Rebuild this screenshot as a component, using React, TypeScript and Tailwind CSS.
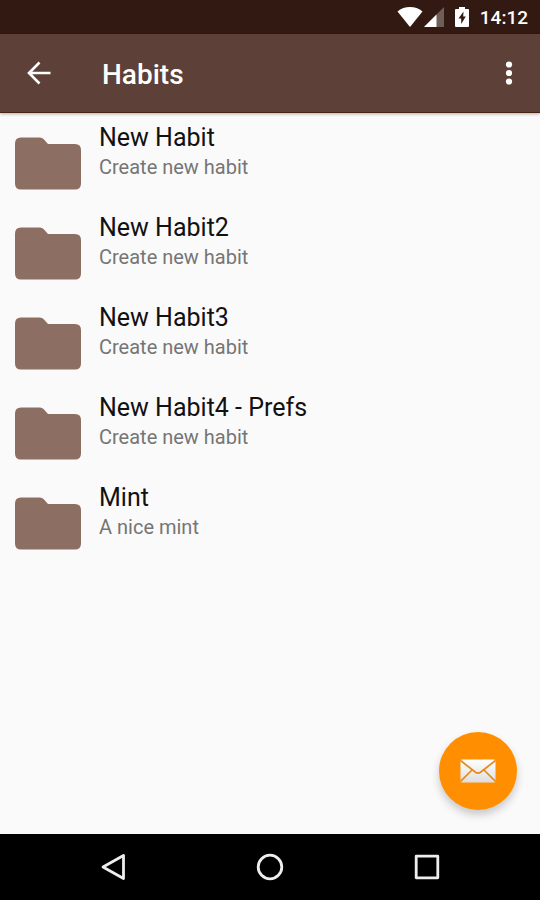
import React from "react";

const habits = [
  { title: "New Habit", subtitle: "Create new habit" },
  { title: "New Habit2", subtitle: "Create new habit" },
  { title: "New Habit3", subtitle: "Create new habit" },
  { title: "New Habit4 - Prefs", subtitle: "Create new habit" },
  { title: "Mint", subtitle: "A nice mint" },
];

function StatusBar() {
  return (
    <div className="flex h-[34px] items-center justify-end bg-[#321911] pr-3 text-white">
      <svg width="26" height="20" viewBox="0 0 26 20" fill="currentColor">
        <path d="M13 20 L0.5 4.5 C4 1.3 8.3 0 13 0 C17.7 0 22 1.3 25.5 4.5 Z" />
      </svg>
      <svg className="ml-px" width="20" height="20" viewBox="0 0 20 20" fill="currentColor">
        <path d="M0 20 L20 0 V20 Z" opacity="0.3" />
        <path d="M0 20 L12.5 7.5 V20 Z" />
      </svg>
      <svg className="ml-[11px]" width="14" height="20" viewBox="0 0 14 20">
        <path d="M4 0 H10 V2 H13 Q14 2 14 3 V19 Q14 20 13 20 H1 Q0 20 0 19 V3 Q0 2 1 2 H4 Z" fill="#fff" />
        <path d="M8.5 4.5 L3.5 11.5 H6.2 V17 L10.8 9.6 H8.2 Z" fill="#321911" />
      </svg>
      <span className="ml-[11px] pt-0.5 text-[19px] leading-6 font-medium">14:12</span>
    </div>
  );
}

function AppBar() {
  return (
    <header className="z-10 flex h-[79px] items-center border-b border-[#4a2412] bg-[#5d4037] text-white shadow-[0_1px_3px_rgba(0,0,0,0.3)]">
      <button type="button" aria-label="Back" className="flex h-full w-[78px] items-center justify-center">
        <svg width="24" height="24" viewBox="0 0 24 24" fill="none" stroke="currentColor" strokeWidth="2.6">
          <path d="M23.5 12 H2.5 M12.5 1.5 L2 12 L12.5 22.5" />
        </svg>
      </button>
      <h1 className="ml-6 flex-1 pt-1 text-[28px] leading-8 font-medium">Habits</h1>
      <button type="button" aria-label="More options" className="flex h-full w-[62px] items-center justify-center">
        <svg width="8" height="24" viewBox="0 0 8 24" fill="currentColor">
          <circle cx="4" cy="3.5" r="3.1" />
          <circle cx="4" cy="12" r="3.1" />
          <circle cx="4" cy="20.5" r="3.1" />
        </svg>
      </button>
    </header>
  );
}

function FolderIcon() {
  return (
    <svg className="shrink-0" width="66" height="53" viewBox="0 0 66 53" fill="#8d6e63">
      <path d="M6 0.5 H25 Q27 0.5 28.5 2 L33 7 H60 Q66 7 66 13 V46.5 Q66 52.5 60 52.5 H6 Q0 52.5 0 46.5 V6.5 Q0 0.5 6 0.5 Z" />
    </svg>
  );
}

function ComposeButton() {
  return (
    <button
      type="button"
      aria-label="Send mail"
      className="absolute right-[23px] bottom-6 flex size-[78px] items-center justify-center rounded-full bg-[#ff8f00] shadow-[0_5px_8px_rgba(0,0,0,0.2)]"
    >
      <svg width="36" height="24" viewBox="0 0 36 24">
        <defs>
          <linearGradient id="paper" x1="0" y1="0" x2="0" y2="1">
            <stop offset="0" stopColor="#ffffff" />
            <stop offset="1" stopColor="#dedede" />
          </linearGradient>
        </defs>
        <rect x="0.5" y="0.5" width="35" height="23" rx="1.5" fill="url(#paper)" />
        <path
          d="M0.5 1.5 L15.5 13.2 Q18 15 20.5 13.2 L35.5 1.5 M0.5 22.5 L12 11 M35.5 22.5 L24 11"
          fill="none"
          stroke="#e88a1a"
          strokeWidth="1.7"
        />
      </svg>
    </button>
  );
}

function NavBar() {
  return (
    <nav className="flex h-[66px] bg-black px-[34px] text-[#eeeeee]">
      <button type="button" aria-label="Back" className="flex flex-1 items-center justify-center">
        <svg width="28" height="28" viewBox="0 0 28 28" fill="none" stroke="currentColor" strokeWidth="2.8" strokeLinejoin="round">
          <path d="M24.5 2.5 V25.5 L4 14 Z" />
        </svg>
      </button>
      <button type="button" aria-label="Home" className="flex flex-1 items-center justify-center">
        <svg width="28" height="28" viewBox="0 0 28 28" fill="none" stroke="currentColor" strokeWidth="2.8">
          <circle cx="14" cy="14" r="11.8" />
        </svg>
      </button>
      <button type="button" aria-label="Recent apps" className="flex flex-1 items-center justify-center">
        <svg width="28" height="28" viewBox="0 0 28 28" fill="none" stroke="currentColor" strokeWidth="2.8" strokeLinejoin="round">
          <rect x="3.2" y="3.2" width="21.6" height="21.6" />
        </svg>
      </button>
    </nav>
  );
}

export default function App() {
  return (
    <div className="flex min-h-screen flex-col bg-[#fafafa] font-[Roboto,sans-serif]">
      <StatusBar />
      <AppBar />
      <main className="relative flex-1">
        <ul>
          {habits.map((habit) => (
            <li key={habit.title} className="flex h-[90px] gap-[18px] px-[15px]">
              <div className="pt-6">
                <FolderIcon />
              </div>
              <div className="min-w-0 pt-2">
                <h2 className="text-[25px] leading-[34px] text-[#111111]">{habit.title}</h2>
                <p className="text-[20px] leading-6 text-[#757575]">{habit.subtitle}</p>
              </div>
            </li>
          ))}
        </ul>
        <ComposeButton />
      </main>
      <NavBar />
    </div>
  );
}
